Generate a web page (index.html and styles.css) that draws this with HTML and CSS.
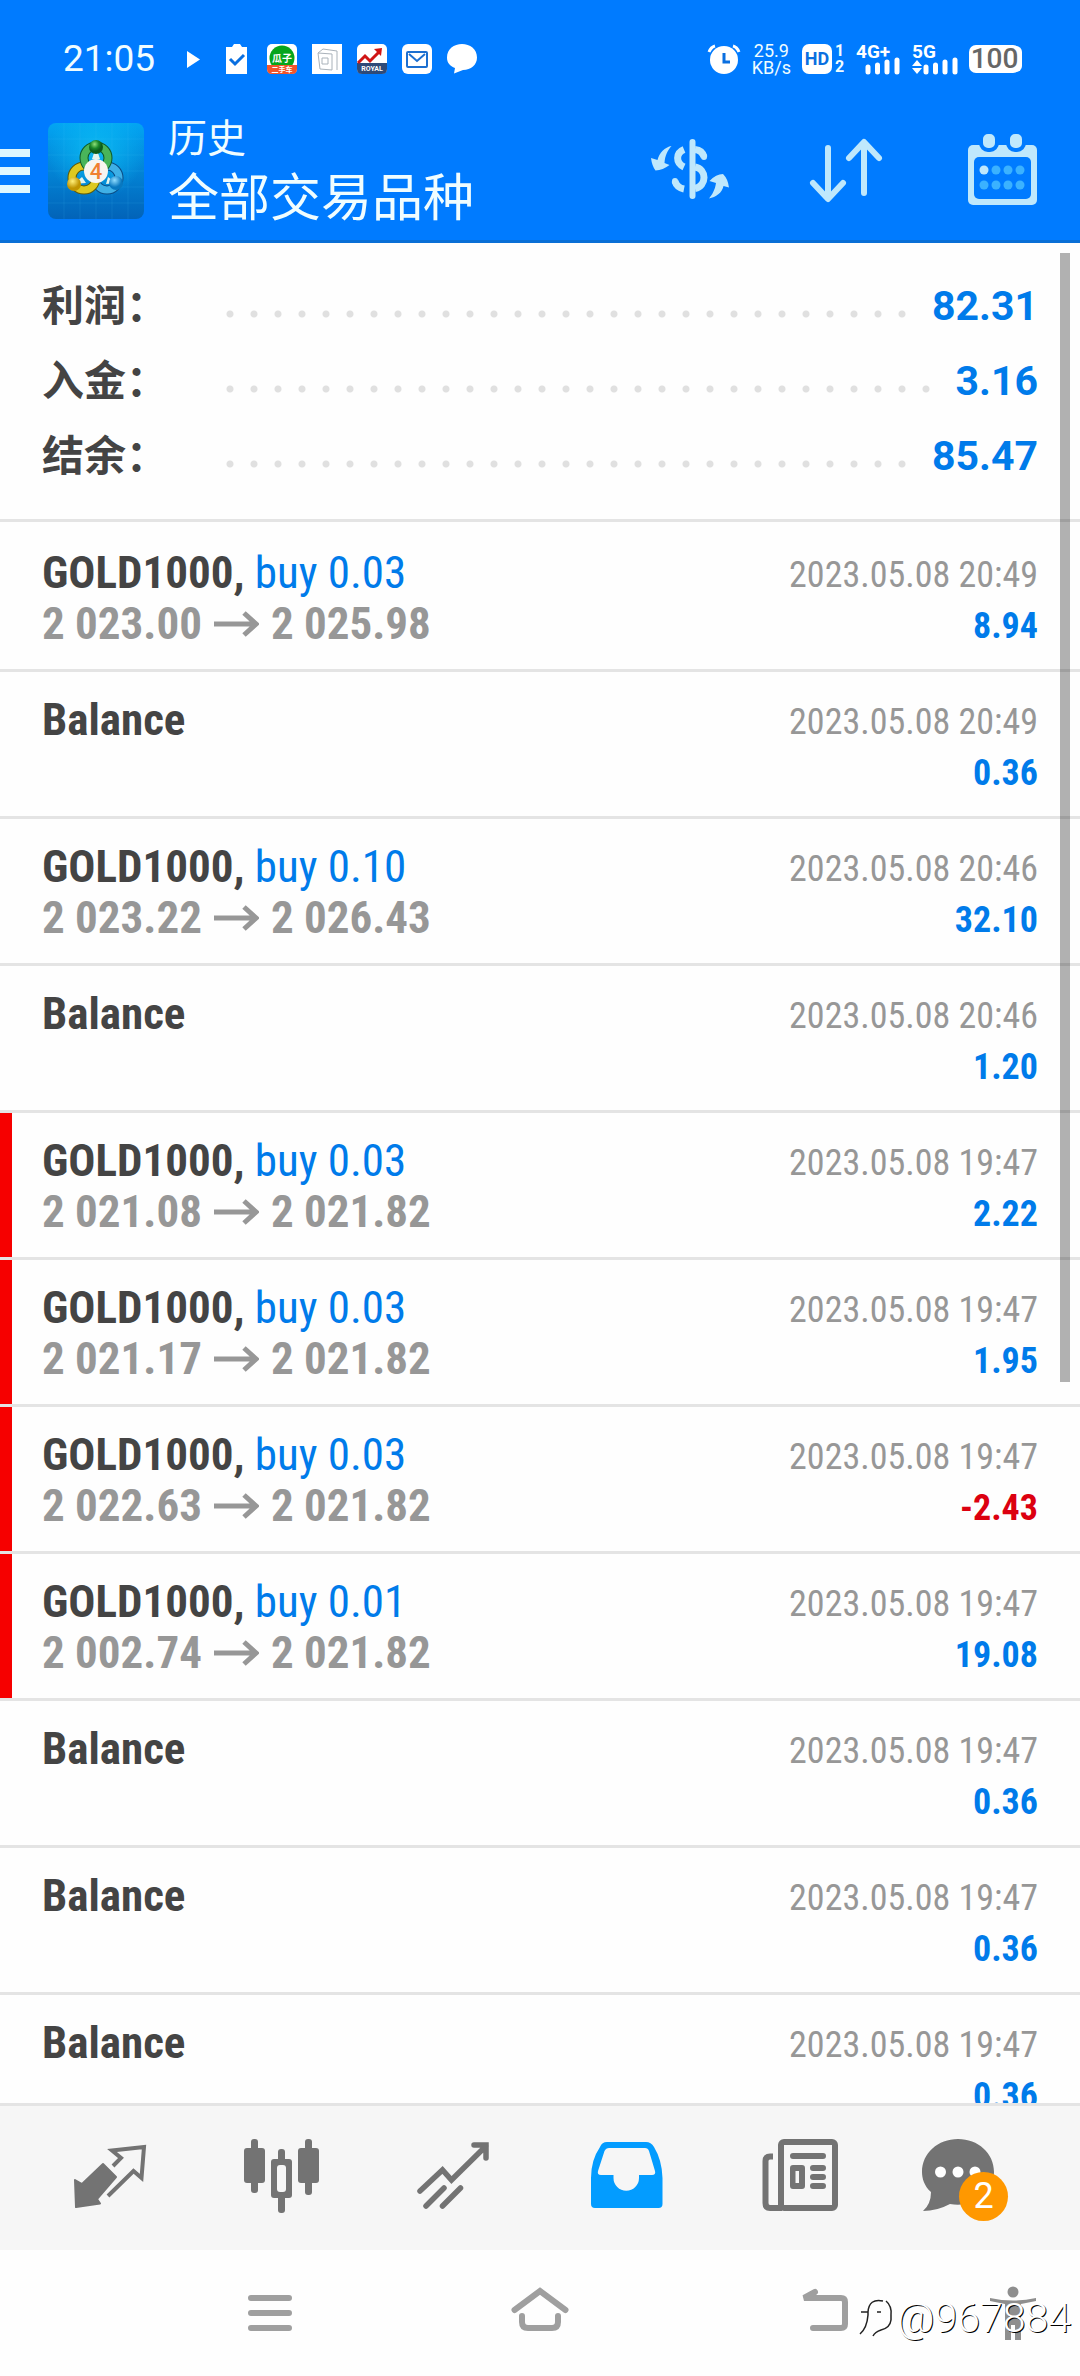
FILE: index.html
```html
<!DOCTYPE html>
<html lang="zh-CN">
<head>
<meta charset="utf-8">
<meta name="viewport" content="width=device-width">
<title>历史</title>
<link rel="stylesheet" href="styles.css">
</head>
<body>
<header class="top">
  <div class="status">
    <span class="clock">21:05</span>
    <div class="notices">
      <svg class="ico" viewBox="0 0 30 30"><path d="M10 7L23 15.500L10 24Z" fill="#fff"/></svg>
      <svg class="ico" viewBox="0 0 30 30"><path d="M4 3H10L12 0H18L20 3H25V30H4Z" fill="#fff"/><path d="M8 15L13 20L22 11" fill="none" stroke="#0a6fe0" stroke-width="3"/></svg>
      <svg class="ico" viewBox="0 0 30 30"><rect width="30" height="30" rx="5" fill="#fff"/><circle cx="15" cy="14" r="12.500" fill="#06a51c"/><path d="M0 21H30V25Q30 30 25 30H5Q0 30 0 25Z" fill="#f2552c"/><text class="g-name" x="15" y="18">瓜子</text><text class="g-sub" x="15" y="28">二手车</text></svg>
      <svg class="ico" viewBox="0 0 30 30"><rect width="30" height="30" fill="#fff"/><path d="M6 9L11 5L25 7V26M6 9L20 10V26L8 25ZM10 14H16V20H10Z" fill="none" stroke="#a9b2ba"/></svg>
      <svg class="ico" viewBox="0 0 30 30"><rect width="30" height="30" rx="5" fill="#fff"/><path d="M0 19H30V25Q30 30 25 30H5Q0 30 0 25Z" fill="#2e4a78"/><path d="M1 19L8 12L13 17L22 8" fill="none" stroke="#d01515" stroke-width="3"/><path d="M17 5L25 4L24 12Z" fill="#d01515"/><text class="r-name" x="15" y="27">ROYAL</text></svg>
      <svg class="ico" viewBox="0 0 30 30"><rect width="30" height="30" rx="6" fill="#fff"/><rect x="5" y="8" width="20" height="15" rx="1" fill="none" stroke="#1c6fd0" stroke-width="2"/><path d="M7 10L15 17L23 10" fill="none" stroke="#1c6fd0" stroke-width="2"/></svg>
      <svg class="ico" viewBox="0 0 30 30"><path d="M15 0C23 0 30 5 30 13.500C30 21 24 26 16 26L7 29.500L8 24C3 22 0 19 0 13.500C0 5 7 0 15 0Z" fill="#fff"/></svg>
    </div>
    <div class="signals">
      <svg width="34" height="30" viewBox="0 0 34 30"><circle cx="17" cy="16" r="14" fill="#fff"/><path d="M17 9V18H23" fill="none" stroke="#0a6fe0" stroke-width="3"/><path d="M2 8Q4 3 8 2M26 2Q30 3 32 8" fill="none" stroke="#fff" stroke-width="3"/></svg>
      <p class="speed"><span>25.9</span><span>KB/s</span></p>
      <div class="hd"><b>HD</b><p><span>1</span><span>2</span></p></div>
      <svg width="45" height="30" viewBox="0 0 45 30"><text class="net" x="0" y="14">4G<tspan>+</tspan></text><path d="M12 23V28M21.500 21V28M31 18V28M41 16V28" stroke="#fff" stroke-width="5" stroke-linecap="round"/></svg>
      <svg width="46" height="30" viewBox="0 0 46 30"><text class="net" x="0" y="14">5G</text><path d="M0 22L5 16L10 22ZM0 24H10L5 30Z" fill="#fff"/><path d="M14 23V28M23.500 21V28M33 18V28M43 16V28" stroke="#fff" stroke-width="5" stroke-linecap="round"/></svg>
      <span class="battery">100</span>
    </div>
  </div>
  <div class="appbar">
    <button class="menu" aria-label="菜单"><i></i><i></i><i></i></button>
    <svg class="logo" viewBox="0 0 96 96">
      <defs>
        <linearGradient id="bg" x1="0" y1="0" x2="0" y2="1"><stop offset="0" stop-color="#03a5f2"/><stop offset="1" stop-color="#0263b8"/></linearGradient>
        <radialGradient id="gl" cx=".5" cy=".3" r=".5"><stop offset="0" stop-color="#0bc0f5" stop-opacity=".8"/><stop offset="1" stop-color="#0bc0f5" stop-opacity="0"/></radialGradient>
        <radialGradient id="gb" cx=".4" cy=".3"><stop offset="0" stop-color="#8fe07a"/><stop offset=".6" stop-color="#1c8a2c"/><stop offset="1" stop-color="#0c5c1c"/></radialGradient>
        <radialGradient id="yb" cx=".4" cy=".3"><stop offset="0" stop-color="#fff07a"/><stop offset="1" stop-color="#c09400"/></radialGradient>
        <radialGradient id="bb" cx=".4" cy=".3"><stop offset="0" stop-color="#8fdcff"/><stop offset="1" stop-color="#0878c0"/></radialGradient>
      </defs>
      <rect width="96" height="96" rx="8" fill="url(#bg)"/><rect width="96" height="96" rx="8" fill="url(#gl)"/>
      <path d="M16 0V96M32 0V96M48 0V96M64 0V96M80 0V96M0 16H96M0 32H96M0 48H96M0 64H96M0 80H96" stroke="#5cc8f5" stroke-opacity=".12"/>
      <g fill="none">
        <circle cx="59" cy="55" r="12" stroke="#0a4b84" stroke-width="9"/><circle cx="59" cy="55" r="12" stroke="#3fb0e6" stroke-width="7"/>
        <circle cx="36" cy="55" r="12" stroke="#5e5a0a" stroke-width="9"/><circle cx="36" cy="55" r="12" stroke="#ddc920" stroke-width="7"/>
        <circle cx="48" cy="35" r="12" stroke="#0e5a2a" stroke-width="9"/><circle cx="48" cy="35" r="12" stroke="#49b55a" stroke-width="7"/>
      </g>
      <path d="M48 24L44 36H52ZM26 61L34 54L38 60ZM68 60L60 54L58 61Z" fill="#e4f4ee"/>
      <circle cx="48" cy="24" r="7" fill="url(#gb)"/><circle cx="26" cy="61" r="7" fill="url(#yb)"/><circle cx="68" cy="60" r="7" fill="url(#bb)"/>
      <circle cx="48" cy="48" r="12" fill="#f7f5f0"/><text class="four" x="48" y="56">4</text>
    </svg>
    <h1 class="title"><span>历史</span><span class="symbols">全部交易品种</span></h1>
    <div class="actions">
      <button aria-label="货币"><svg viewBox="0 0 96 96"><g transform="translate(-2 -3)"><path d="M31.500 26C25 27 19 33 17.500 40L11 38Q12 46 15.500 50.500Q23 50 29.500 45L24.500 43C25 35 28 30 31.500 26ZM69 78.500C76 77 82 73 83.500 66L89 67.500Q88 59 83 54Q76 54 69.500 61L76 63C75 70 72 75 69 78.500Z" fill="#bfe8fc"/><g fill="none" stroke="#bfe8fc" stroke-width="7"><path d="M44 29.500C35.500 33 35.500 43 44 47M44 69C39 68 36 65 35 61" /><path d="M55 29.500C60 30 63 33 64 37M55 47C67 49 67 66 55 68.500"/><path d="M52.500 22V76M64 36V37M35 61V62" stroke-width="6" stroke-linecap="round"/></g></g></svg></button>
      <button aria-label="排序"><svg viewBox="0 0 96 96"><path d="M30 25V75M15 60L30 76L45 60M66 70V20M51 35L66 19L81 35" fill="none" stroke="#bfe8fc" stroke-width="6" stroke-linecap="round" stroke-linejoin="round"/></svg></button>
      <button aria-label="日期"><svg viewBox="0 0 96 96"><rect x="14" y="22" width="69" height="60" rx="5" fill="#bfe8fc"/><rect x="20" y="34" width="57" height="42" rx="5" fill="#007bff"/><g fill="#bfe8fc" stroke="#007bff" stroke-width="4"><rect x="27" y="9" width="16" height="18" rx="7"/><rect x="54" y="9" width="16" height="18" rx="7"/></g><circle cx="30" cy="47" r="4.500" fill="#bfe8fc"/><g fill="#3bb2ff"><circle cx="42" cy="47" r="4.500"/><circle cx="54" cy="47" r="4.500"/><circle cx="66" cy="47" r="4.500"/><circle cx="30" cy="62" r="4.500"/><circle cx="42" cy="62" r="4.500"/><circle cx="54" cy="62" r="4.500"/><circle cx="66" cy="62" r="4.500"/></g></svg></button>
    </div>
  </div>
</header>

<svg class="defs" aria-hidden="true"><symbol id="to" viewBox="0 0 45 26"><path d="M0 13H42M30 2L42 13L30 24" fill="none" stroke="currentColor" stroke-width="5"/></symbol></svg>

<main class="history">
  <dl class="summary">
    <div><dt>利润：</dt><dd>82.31</dd></div>
    <div><dt>入金：</dt><dd>3.16</dd></div>
    <div><dt>结余：</dt><dd>85.47</dd></div>
  </dl>
  <ul class="deals">
    <li><p><b>GOLD1000,</b> <span class="side">buy 0.03</span></p><time>2023.05.08 20:49</time><p class="prices">2 023.00<svg><use href="#to"/></svg>2 025.98</p><strong>8.94</strong></li>
    <li><p><b>Balance</b></p><time>2023.05.08 20:49</time><strong>0.36</strong></li>
    <li><p><b>GOLD1000,</b> <span class="side">buy 0.10</span></p><time>2023.05.08 20:46</time><p class="prices">2 023.22<svg><use href="#to"/></svg>2 026.43</p><strong>32.10</strong></li>
    <li><p><b>Balance</b></p><time>2023.05.08 20:46</time><strong>1.20</strong></li>
    <li class="flag"><p><b>GOLD1000,</b> <span class="side">buy 0.03</span></p><time>2023.05.08 19:47</time><p class="prices">2 021.08<svg><use href="#to"/></svg>2 021.82</p><strong>2.22</strong></li>
    <li class="flag"><p><b>GOLD1000,</b> <span class="side">buy 0.03</span></p><time>2023.05.08 19:47</time><p class="prices">2 021.17<svg><use href="#to"/></svg>2 021.82</p><strong>1.95</strong></li>
    <li class="flag"><p><b>GOLD1000,</b> <span class="side">buy 0.03</span></p><time>2023.05.08 19:47</time><p class="prices">2 022.63<svg><use href="#to"/></svg>2 021.82</p><strong class="loss">-2.43</strong></li>
    <li class="flag"><p><b>GOLD1000,</b> <span class="side">buy 0.01</span></p><time>2023.05.08 19:47</time><p class="prices">2 002.74<svg><use href="#to"/></svg>2 021.82</p><strong>19.08</strong></li>
    <li><p><b>Balance</b></p><time>2023.05.08 19:47</time><strong>0.36</strong></li>
    <li><p><b>Balance</b></p><time>2023.05.08 19:47</time><strong>0.36</strong></li>
    <li><p><b>Balance</b></p><time>2023.05.08 19:47</time><strong>0.36</strong></li>
  </ul>
  <div class="thumb"></div>
</main>

<nav class="tabs">
  <button aria-label="行情"><svg viewBox="0 0 96 96"><path d="M13 50L20 54L41 34L54 47L35 69L38 73.500L14 77Z" fill="#737373" stroke="#737373" stroke-width="2" stroke-linejoin="round"/><path d="M51 36L59 28L50 20.500L82 17L79.500 48L71.500 41L46 66" fill="none" stroke="#737373" stroke-width="4"/></svg></button>
  <button aria-label="图表"><svg viewBox="0 0 96 96"><g fill="#737373"><rect x="10" y="18" width="21" height="35" rx="3"/><rect x="17" y="9" width="7" height="54" rx="3"/><rect x="37" y="29" width="21" height="39" rx="3"/><rect x="44" y="19" width="7" height="64" rx="3"/><rect x="64" y="18" width="21" height="35" rx="3"/><rect x="71" y="9" width="7" height="56" rx="3"/></g><rect x="43" y="35" width="9" height="27" rx="3" fill="#f6f6f6"/></svg></button>
  <button aria-label="交易"><svg viewBox="0 0 96 96"><path d="M14 61L36.500 40L45.500 50L80 16M68 15H80V28M20 76L38 58M36.500 76L54.500 58" fill="none" stroke="#737373" stroke-width="5.500" stroke-linecap="round"/></svg></button>
  <button aria-label="历史" aria-current="page"><svg viewBox="0 0 96 96"><path fill="#039cff" fill-rule="evenodd" d="M29 12H68Q73 12 76 17Q84 30 84.500 48V74Q84.500 78 80.500 78H17Q13 78 13 74V48Q13 30 22 17Q24 12 29 12ZM31 18Q28 18 26.500 21L20 41Q19 45 23 45H35.500V48A12.500 12.500 0 0 0 61 48V45H74Q78 45 77 41L71 21Q70 18 67 18Z"/></svg></button>
  <button aria-label="新闻"><svg viewBox="0 0 96 96"><g fill="none" stroke="#737373" stroke-width="6"><rect x="31" y="12" width="54" height="66" rx="3"/><path d="M23 26.500H20Q15.500 26.500 15.500 31V73Q15.500 78 20 78H32"/><path d="M43 26H73M63 38H73M63 47H73M63 56H73" stroke-linecap="round"/></g><path fill="#737373" fill-rule="evenodd" d="M43 35H52Q55 35 55 38V56Q55 59 52 59H43Q40 59 40 56V38Q40 35 43 35ZM45.500 41V53H49V41Z"/></svg></button>
  <button class="chat" aria-label="消息"><svg viewBox="0 0 96 96"><path d="M36 9C56 9 72 23 72 42C72 63 52 78 28 74Q15 81 1 81Q9 74 9 62C2 56 0 48 0 42C0 23 16 9 36 9Z" fill="#737373"/><g fill="#fff"><circle cx="18.500" cy="42" r="5.500"/><circle cx="36" cy="42" r="5.500"/><circle cx="53" cy="42" r="5.500"/></g></svg><span class="badge">2</span></button>
</nav>

<nav class="system">
  <button class="recent" aria-label="最近任务"><svg viewBox="0 0 90 60"><path d="M26 15H64M26 30H64M26 45H64"/></svg></button>
  <button aria-label="主屏幕"><svg viewBox="0 0 90 60"><path d="M19.500 27L45 8L70.500 27M27 33V39Q27 45 33 45H57Q63 45 63 39V33"/></svg></button>
  <button aria-label="返回"><svg viewBox="0 0 90 60"><path d="M50 9L39 15H76Q80 15 80 19V41Q80 45 76 45H48"/></svg></button>
  <button aria-label="无障碍"><svg class="solid" viewBox="0 0 90 60"><circle cx="45" cy="9" r="5.500"/><path d="M22 15Q45 20 68 15V18L53 21V57H47V42H43V57H37V21L22 18Z"/></svg></button>
  <p class="watermark"><svg viewBox="0 0 34 40"><path d="M24 3Q10 0 9 14M2 14H9V17Q8 30 1 36M18 14H22M27 3Q33 8 32 17V22Q31 30 22 32Q16 34 14 38" fill="none" stroke="#222" stroke-width="1.500"/></svg>@967884</p>
</nav>
</body>
</html>
```
FILE: styles.css
```css
* { box-sizing: border-box; margin: 0; padding: 0; }

body {
  display: flex;
  flex-direction: column;
  height: 100vh;
  overflow: hidden;
  background: #fefefe;
  color: #444;
  font-family: Roboto, "Noto Sans CJK SC", sans-serif;
}

button { border: 0; background: none; font: inherit; color: inherit; }
svg { display: block; overflow: visible; }
.defs { display: none; }

/* header */
.top {
  flex: none;
  background: #007bff;
  border-bottom: 3px solid #0a6fd6;
  color: #f0fdff;
}
.status {
  display: flex;
  align-items: center;
  height: 100px;
  padding: 18px 57px 0 63px;
}
.clock { width: 114px; font-size: 37px; line-height: 48px; }
.notices { display: flex; gap: 15px; flex: 1; }
.ico { width: 30px; height: 30px; }
.ico text { text-anchor: middle; fill: #fff; font-weight: 700; }
.g-name { font-size: 10px; }
.g-sub { font-size: 7px; }
.r-name { font-size: 7px; }
.signals { display: flex; align-items: center; gap: 11px; }
.speed { display: flex; flex-direction: column; font-size: 18px; line-height: 17px; text-align: center; }
.hd { display: flex; align-items: center; gap: 2px; }
.hd b {
  width: 30px;
  border-radius: 7px;
  background: #fff;
  color: #0a6fe0;
  font-size: 18px;
  line-height: 30px;
  text-align: center;
}
.hd p { display: flex; flex-direction: column; width: 11px; font-size: 16px; font-weight: 700; line-height: 16px; text-align: center; }
.net { fill: #fff; font-size: 19px; font-weight: 700; }
.battery {
  width: 51px;
  margin-right: 3px;
  border-radius: 7px;
  background: #fff;
  box-shadow: 3px 0 0 -1px #fff;
  color: #666;
  font-size: 28px;
  font-weight: 500;
  line-height: 28px;
  text-align: center;
}

.appbar { display: flex; align-items: center; height: 140px; padding: 2px 30px 0 0; }
.menu { display: flex; flex-direction: column; gap: 10px; width: 30px; }
.menu i { height: 8px; background: #dff8ff; }
.logo { width: 96px; height: 96px; margin-left: 18px; }
.four { fill: #f08030; font-size: 22px; font-weight: 500; text-anchor: middle; }
.title {
  display: flex;
  flex: 1;
  flex-direction: column;
  padding: 4px 0 0 24px;
  font-size: 39px;
  font-weight: 400;
  line-height: 52px;
  white-space: nowrap;
}
.symbols { font-size: 51px; line-height: 68px; }
.actions { display: flex; gap: 60px; }
.actions button, .actions svg { width: 96px; height: 96px; }

/* account history */
.history { position: relative; flex: 1; min-height: 0; overflow: hidden; }
.summary {
  padding: 26px 42px 25px;
  border-bottom: 3px solid #e4e4e4;
}
.summary div { display: flex; align-items: center; line-height: 75px; }
.summary dt { width: 176px; font-size: 42px; font-weight: 700; }
.summary dd {
  display: flex;
  flex: 1;
  gap: 12px;
  color: #007bea;
  font-size: 41px;
  font-weight: 700;
}
.summary dd::before {
  content: "";
  flex: 1;
  background: radial-gradient(circle at 12px 45px, #e0e0e0 3px, transparent 4px) 0 0 / 24px 75px repeat-x;
}
.deals {
  padding-top: 3px;
  list-style: none;
  font-family: "Roboto Condensed", Roboto, sans-serif;
}
.deals li {
  display: grid;
  grid-template-columns: 1fr auto;
  grid-template-rows: 51px 51px;
  align-items: start;
  height: 147px;
  padding: 22px 42px 0;
  border-bottom: 3px solid #e4e4e4;
  font-size: 45px;
  line-height: 51px;
}
.deals .flag { background: linear-gradient(#f60000, #f60000) 0 0 / 12px 100% no-repeat; }
.side { color: #007bea; }
.prices { display: flex; align-items: center; gap: 12px; color: #979797; font-weight: 700; }
.prices svg { width: 45px; height: 26px; }
.deals time, .deals strong { grid-column: 2; font-size: 36px; line-height: 57px; text-align: right; }
.deals time { color: #979797; }
.deals strong { color: #007bea; }
.deals .loss { color: #dc0010; }
.thumb {
  position: absolute;
  top: 10px;
  right: 10px;
  width: 10px;
  height: calc(61% - 6px);
  background: rgba(0, 0, 0, .3);
}

/* bottom tabs */
.tabs {
  display: flex;
  flex: none;
  padding: 24px;
  border-top: 3px solid #e4e4e4;
  background: #f6f6f6;
}
.tabs button { flex: 1; display: flex; justify-content: center; }
.tabs svg { width: 96px; height: 96px; }
.chat { position: relative; }
.badge {
  position: absolute;
  left: 50%;
  top: 42px;
  width: 49px;
  margin-left: -11px;
  border-radius: 50%;
  background: #ff9800;
  color: #fff;
  font-size: 36px;
  line-height: 49px;
}

/* system navigation */
.system {
  position: relative;
  display: grid;
  flex: none;
  grid-template-columns: 1fr 2fr 2fr 2fr 1fr;
  height: 126px;
  align-items: center;
}
.system button { display: flex; justify-content: center; }
.recent { grid-column: 2; }
.system button svg { width: 90px; height: 60px; fill: none; stroke: #9f9f9f; stroke-width: 6; stroke-linecap: round; }
.system .solid { fill: #8e8e8e; stroke: none; }
.watermark {
  position: absolute;
  right: 9px;
  bottom: 34px;
  display: flex;
  align-items: center;
  gap: 4px;
  color: #fff;
  font-size: 41px;
  font-weight: 300;
  line-height: 48px;
  text-shadow: 1px 1px 0 #000;
}
.watermark svg { width: 34px; height: 40px; }
```
